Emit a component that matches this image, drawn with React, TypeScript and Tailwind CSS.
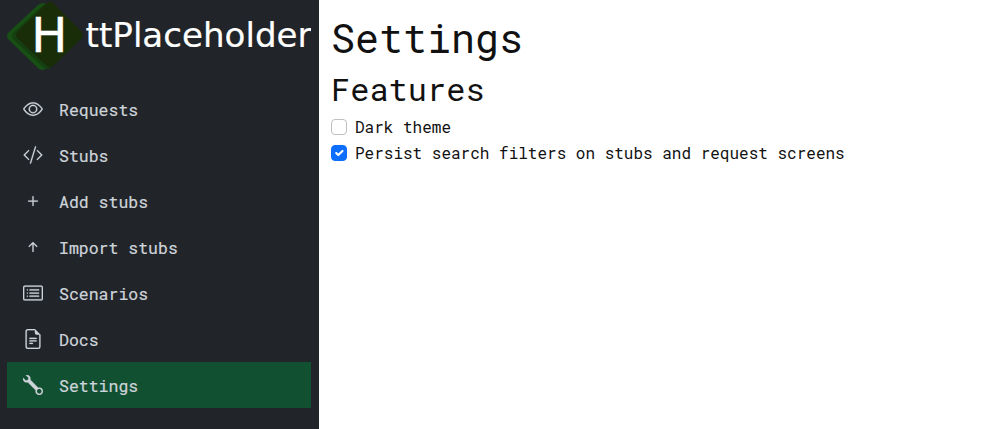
import { useState } from "react";
import type { IconType } from "react-icons";
import {
  BsEye,
  BsCodeSlash,
  BsPlus,
  BsArrowUpShort,
  BsCardList,
  BsFileEarmarkText,
  BsWrench,
} from "react-icons/bs";

const items: { label: string; icon: IconType }[] = [
  { label: "Requests", icon: BsEye },
  { label: "Stubs", icon: BsCodeSlash },
  { label: "Add stubs", icon: BsPlus },
  { label: "Import stubs", icon: BsArrowUpShort },
  { label: "Scenarios", icon: BsCardList },
  { label: "Docs", icon: BsFileEarmarkText },
  { label: "Settings", icon: BsWrench },
];

function Logo() {
  return (
    <svg width="304" height="72" viewBox="0 0 304 72" className="block shrink-0" aria-label="HttPlaceholder">
      <path d="M31 5 Q34 3 37 3 L60 20 V50 L37 70 Q34 70 32 69 L1 39 Q-1 36 1 33 Z" fill="#184f15" />
      <path d="M36 5 Q38 3 42 3 L60 20 V50 L42 69 Q39 69 36 67 L6 39 Q4 36 6 33 Z" fill="#153f10" />
      <path d="M40 3 Q43 0 46 3 L75 32 Q77 35 75 38 L46 66 Q43 69 40 66 L10 38 Q8 35 10 32 Z" fill="#192d08" />
      <text x="24.2" y="52" fontSize="48" textLength="37" fill="#ffffff" stroke="#ffffff" strokeWidth="0.4" className="font-['DejaVu_Sans',sans-serif]">H</text>
      <text x="78.6" y="47" fontSize="34" textLength="226" lengthAdjust="spacingAndGlyphs" fill="#ffffff" stroke="#ffffff" strokeWidth="0.2" className="font-['DejaVu_Sans',sans-serif]">ttPlaceholder</text>
    </svg>
  );
}

function Option({ label, initial }: { label: string; initial: boolean }) {
  const [checked, setChecked] = useState(initial);
  return (
    <label className="mb-[2px] flex min-h-6 items-center gap-2 text-base leading-6">
      <input type="checkbox" checked={checked} onChange={() => setChecked(!checked)} className="peer sr-only" />
      <span
        className={
          checked
            ? "h-4 w-4 shrink-0 rounded-[4px] border border-[#0d6efd] bg-[#0d6efd]"
            : "h-4 w-4 shrink-0 rounded-[4px] border border-[#bfbfbf] bg-white"
        }
      >
        {checked && (
          <svg viewBox="0 0 20 20" className="block h-[14px] w-[14px]">
            <path d="m6 10 3 3 6-6" fill="none" stroke="#fff" strokeWidth="3" strokeLinecap="round" strokeLinejoin="round" />
          </svg>
        )}
      </span>
      <span>{label}</span>
    </label>
  );
}

export default function App() {
  return (
    <div className="flex h-[429px] w-full overflow-hidden bg-white font-['Roboto_Mono','Liberation_Mono',monospace] text-[#111111]">
      <aside className="flex w-[319px] shrink-0 flex-col bg-[#212529] pl-[7px] pr-2">
        <Logo />
        <nav className="mt-[14px] flex flex-col">
          {items.map(({ label, icon: Icon }) => (
            <a
              key={label}
              href="#"
              className={
                label === "Settings"
                  ? "flex h-[46px] items-center bg-[#115132] px-4 text-[#ced4da]"
                  : "flex h-[46px] items-center px-4 text-[#ced4da]"
              }
            >
              <Icon size={20} className="shrink-0 stroke-[0.15]" />
              <span className="ml-4 pt-[2px] text-[16.5px] leading-6 [-webkit-text-stroke:0.2px_#ced4da]">{label}</span>
            </a>
          ))}
        </nav>
      </aside>
      <main className="flex-1 px-3 pt-[14px]">
        <h1 className="mb-2 text-[40px] leading-[48px]">Settings</h1>
        <h2 className="mb-[7px] text-[32px] leading-[38px]">Features</h2>
        <Option label="Dark theme" initial={false} />
        <Option label="Persist search filters on stubs and request screens" initial={true} />
      </main>
    </div>
  );
}
